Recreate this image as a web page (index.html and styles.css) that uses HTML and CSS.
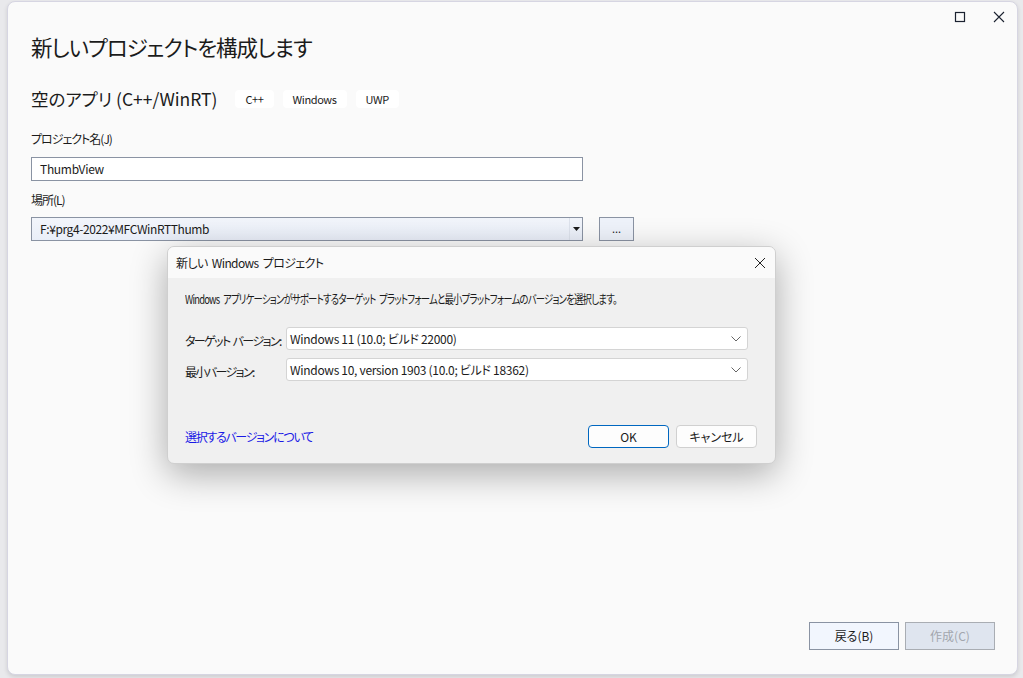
FILE: index.html
```html
<!DOCTYPE html>
<html lang="ja">
<head>
  <meta charset="UTF-8" />
  <title>新しいプロジェクトを構成します</title>
  <link rel="stylesheet" href="styles.css">
</head>
<body>
  <div class="window">
    <div class="caption-buttons">
      <svg width="12" height="12" viewBox="0 0 12 12"><rect x="1.5" y="1.5" width="9" height="9" fill="none" stroke="#1b2230" stroke-width="1.2"/></svg>
      <svg width="12" height="12" viewBox="0 0 12 12"><path d="M1 1 L11 11 M11 1 L1 11" stroke="#1b2230" stroke-width="1.1"/></svg>
    </div>

    <div class="content">
      <h1>新しいプロジェクトを構成します</h1>

      <div class="template">
        <span class="template-name">空のアプリ (C++/WinRT)</span>
        <span class="tag">C++</span>
        <span class="tag">Windows</span>
        <span class="tag">UWP</span>
      </div>

      <div class="field">
        <div class="label">プロジェクト名(J)</div>
        <div class="textbox">ThumbView</div>
      </div>

      <div class="field">
        <div class="label">場所(L)</div>
        <div class="field-row">
          <div class="combo">
            <span class="combo-text">F:¥prg4-2022¥MFCWinRTThumb</span>
            <span class="combo-arrow">
              <svg width="7" height="4" viewBox="0 0 7 4"><path d="M0 0 H7 L3.5 4 Z" fill="#1b1b1b"/></svg>
            </span>
          </div>
          <div class="browse">...</div>
        </div>
      </div>
    </div>

    <div class="footer">
      <div class="button">戻る(B)</div>
      <div class="button disabled">作成(C)</div>
    </div>

    <div class="dialog">
      <div class="dialog-title">
        <span>新しい&nbsp;Windows&nbsp;プロジェクト</span>
        <svg width="12" height="12" viewBox="0 0 12 12"><path d="M1 1 L11 11 M11 1 L1 11" stroke="#222" stroke-width="1"/></svg>
      </div>
      <div class="dialog-body">
        <p class="desc"><span>Windows アプリケーションがサポートするターゲット プラットフォームと最小プラットフォームのバージョンを選択します。</span></p>

        <div class="version-row">
          <span class="version-label">ターゲット バージョン:</span>
          <div class="version-select">
            <span>Windows 11 (10.0; ビルド 22000)</span>
            <svg width="10" height="6" viewBox="0 0 10 6"><path d="M0.5 0.5 L5 5 L9.5 0.5" fill="none" stroke="#666" stroke-width="1"/></svg>
          </div>
        </div>
        <div class="version-row">
          <span class="version-label">最小バージョン:</span>
          <div class="version-select">
            <span>Windows 10, version 1903 (10.0; ビルド 18362)</span>
            <svg width="10" height="6" viewBox="0 0 10 6"><path d="M0.5 0.5 L5 5 L9.5 0.5" fill="none" stroke="#666" stroke-width="1"/></svg>
          </div>
        </div>

        <div class="dialog-footer">
          <a class="link" href="#">選択するバージョンについて</a>
          <div class="dialog-buttons">
            <div class="dbutton primary">OK</div>
            <div class="dbutton">キャンセル</div>
          </div>
        </div>
      </div>
    </div>
  </div>
</body>
</html>
```

FILE: styles.css
```css
html, body {
  margin: 0;
  height: 100%;
}
body {
  background: #e9e9ec;
  font-family: "Noto Sans CJK JP", "Noto Sans", sans-serif;
  font-feature-settings: "palt";
  color: #1b1b1b;
  overflow: hidden;
}
.window {
  position: relative;
  box-sizing: border-box;
  margin: 1px 5px 0 7px;
  height: 674px;
  background: #fafafa;
  border: 1px solid #d6d5e2;
  border-radius: 8px;
  box-shadow: 0 2px 4px rgba(0,0,0,0.12);
  display: flex;
  flex-direction: column;
}
.caption-buttons {
  position: absolute;
  top: 9px;
  right: 12px;
  display: flex;
  gap: 27px;
}
.content {
  padding: 28px 0 0 23px;
}
h1 {
  margin: 0;
  font-size: 21.5px;
  font-weight: 400;
  line-height: 34px;
  letter-spacing: -1px;
}
.template {
  display: flex;
  align-items: center;
  margin-top: 23px;
  gap: 9px;
}
.template-name {
  font-size: 17.5px;
  line-height: 24px;
  margin-right: 9px;
}
.tag {
  background: #ffffff;
  border-radius: 4px;
  font-size: 11px;
  line-height: 18px;
  letter-spacing: -0.4px;
  padding: 0 10px;
}
.field {
  margin-top: 20px;
}
.field + .field {
  margin-top: 11px;
}
.label {
  font-size: 12px;
  line-height: 16px;
  letter-spacing: -1px;
  margin-bottom: 10px;
}
.field + .field .label {
  margin-bottom: 9px;
}
.textbox {
  box-sizing: border-box;
  width: 552px;
  height: 24px;
  border: 1px solid #8a93a3;
  background: #ffffff;
  font-size: 12px;
  line-height: 22px;
  letter-spacing: -0.3px;
  padding-left: 8px;
}
.field-row {
  display: flex;
  gap: 16px;
}
.combo {
  box-sizing: border-box;
  width: 552px;
  height: 24px;
  border: 1px solid #8a93a3;
  background: linear-gradient(#f2f5fb, #e9eef8);
  display: flex;
  font-size: 12px;
  line-height: 22px;
  letter-spacing: -0.4px;
}
.combo-text {
  flex: 1;
  padding-left: 8px;
}
.combo-arrow {
  width: 12px;
  border-left: 1px solid #dde2ec;
  display: flex;
  align-items: center;
  justify-content: center;
}
.browse {
  box-sizing: border-box;
  width: 35px;
  height: 24px;
  border: 1px solid #8a93a3;
  background: #eef2fa;
  font-size: 11px;
  line-height: 20px;
  text-align: center;
}
.footer {
  margin-top: auto;
  display: flex;
  justify-content: flex-end;
  gap: 6px;
  padding: 0 22px 24px 0;
}
.button {
  box-sizing: border-box;
  width: 90px;
  height: 28px;
  border: 1px solid #8a93a3;
  background: #f2f6fe;
  font-size: 12px;
  line-height: 26px;
  text-align: center;
}
.button.disabled {
  background: #dfe5ef;
  border-color: #a9adb3;
  color: #a2a6ad;
}

/* modal */
.dialog {
  position: absolute;
  left: 159px;
  top: 244px;
  width: 607px;
  background: #f0f0f0;
  border: 1px solid #cfcfcf;
  border-radius: 7px;
  box-shadow: 0 10px 36px rgba(0,0,0,0.32);
  overflow: hidden;
}
.dialog-title {
  height: 31px;
  background: #fafafa;
  display: flex;
  align-items: center;
  justify-content: space-between;
  padding: 0 9px 0 8px;
  font-size: 12px;
  letter-spacing: -0.6px;
  word-spacing: 2px;
}
.dialog-body {
  padding: 12px 27px 15px 17px;
}
.desc {
  margin: 0 0 19px;
  font-size: 12px;
  line-height: 18px;
  white-space: nowrap;
}
.desc span {
  display: inline-block;
  letter-spacing: -1px;
  word-spacing: 3px;
  transform: scaleX(0.78);
  transform-origin: left center;
}
.version-row {
  display: flex;
  align-items: center;
  margin-bottom: 8px;
}
.version-label {
  width: 101px;
  font-size: 12px;
  letter-spacing: -1.6px;
  word-spacing: 2px;
  white-space: nowrap;
  padding-top: 3px;
}
.version-select {
  box-sizing: border-box;
  flex: 1;
  height: 23px;
  background: #ffffff;
  border: 1px solid #d4d4d4;
  border-radius: 3px;
  display: flex;
  align-items: center;
  justify-content: space-between;
  padding: 0 6px 0 3px;
  font-size: 12px;
  letter-spacing: -0.3px;
}
.dialog-footer {
  display: flex;
  align-items: center;
  justify-content: space-between;
  margin-top: 44px;
}
.dialog-footer .link {
  color: #1a1ae6;
  text-decoration: none;
  font-size: 12px;
  letter-spacing: -1.3px;
}
.dialog-buttons {
  display: flex;
  gap: 7px;
  margin-right: -9px;
}
.dbutton {
  box-sizing: border-box;
  width: 81px;
  height: 23px;
  background: #fdfdfd;
  border: 1px solid #d0d0d0;
  border-radius: 4px;
  font-size: 12px;
  line-height: 21px;
  text-align: center;
}
.dbutton.primary {
  border-color: #0067c0;
}
```
